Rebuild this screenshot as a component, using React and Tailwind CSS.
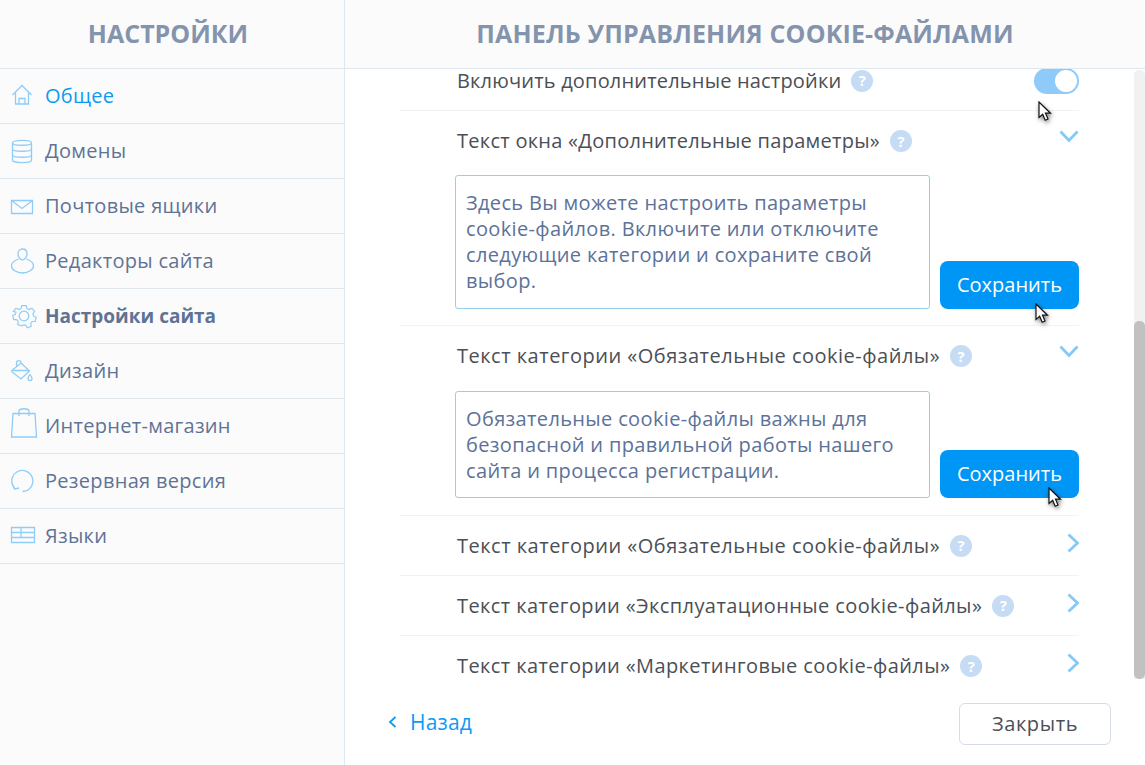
const font = { fontFamily: '"Open Sans", sans-serif' };

function NavIcon({ name }) {
  const common = {
    viewBox: "0 0 26 26",
    fill: "none",
    stroke: "#8fcdf8",
    strokeWidth: 1.3,
    className: "h-[26px] w-[26px] shrink-0 overflow-visible",
  };
  if (name === "home") {
    return (
      <svg {...common}>
        <path d="M1.500 12 11 2.500 20.500 12M4.500 10v11h13V10M8 21v-5.500h6V21" />
      </svg>
    );
  }
  if (name === "db") {
    return (
      <svg {...common}>
        <path d="M1.500 5c0-3.500 19-3.500 19 0v17c0 3.500-19 3.500-19 0Z" />
        <path d="M1.500 5c0 3 19 3 19 0M1.500 11c0 3 19 3 19 0M1.500 17c0 3 19 3 19 0" />
      </svg>
    );
  }
  if (name === "mail") {
    return (
      <svg {...common}>
        <path d="M.5 7.500h21v13H.5zM.5 7.500l10.500 8 10.500-8" />
      </svg>
    );
  }
  if (name === "user") {
    return (
      <svg {...common}>
        <path d="M11.500 1c2.800 0 4.500 2 4.500 4.800s-2 6-4.500 6-4.500-3.200-4.500-6S8.700 1 11.500 1Z" />
        <path d="M7.500 11C3.500 12.500.5 15 .5 18c0 3.500 5 7 11 7s11-3.500 11-7c0-3-3-5.500-7-7" />
      </svg>
    );
  }
  if (name === "gear") {
    return (
      <svg {...common}>
        <circle cx="13" cy="13" r="4.800" />
        <path d="M10.500 1.500h5l.8 3.300 2.500 1.100 3-1.600 3 3.600-1.900 2.800.7 2.500 2.900 1.300-1.100 4.500-3.300.1-1.700 2.100.6 3.300-4.300 1.500-1.800-2.800h-2.800L10.300 24l-4.300-1.500.6-3.300-1.700-2.100-3.300-.1-1.100-4.500 2.900-1.300.7-2.500L1.200 7.900l3-3.600 3 1.600 2.500-1.100z" transform="translate(1.300 1.300) scale(.9)" />
      </svg>
    );
  }
  if (name === "bucket") {
    return (
      <svg {...common}>
        <path d="M10 5 18.500 13 10 21 1 14 .8 12.500ZM1 12.500h17.500M5.500 9V4.500c0-2.500 4.500-2.500 4.500 0V6" />
        <path d="M21 20.500c0 2.800-4 2.800-4 0 0-1.300 1-2.500 2-3.800 1 1.300 2 2.500 2 3.800Z" />
      </svg>
    );
  }
  if (name === "bag") {
    return (
      <svg {...common}>
        <path d="M2 .5h22l1.500 23.500H.5ZM8 3v-5c0-3 10-3 10 0v5" />
      </svg>
    );
  }
  if (name === "restore") {
    return (
      <svg {...common}>
        <path d="M3.500 20A10.500 10.500 0 1 1 11.500 23.500" />
        <path d="M1.500 16.500 3.500 21l4.500-1" />
      </svg>
    );
  }
  return (
    <svg {...common}>
      <path d="M.5 4.500h23v15H.5zM.5 9.500h23M.5 14.500h23M10 4.500v10" />
    </svg>
  );
}

const navItems = [
  { icon: "home", label: "Общее", active: true },
  { icon: "db", label: "Домены" },
  { icon: "mail", label: "Почтовые ящики" },
  { icon: "user", label: "Редакторы сайта" },
  { icon: "gear", label: "Настройки сайта", bold: true },
  { icon: "bucket", label: "Дизайн" },
  { icon: "bag", label: "Интернет-магазин" },
  { icon: "restore", label: "Резервная версия" },
  { icon: "table", label: "Языки" },
];

function Help() {
  return (
    <span className="ml-[10px] flex h-[22px] w-[22px] shrink-0 items-center justify-center rounded-full bg-[#c6dcf4] text-[15px] font-bold tracking-normal text-white">
      ?
    </span>
  );
}

function ChevronDown() {
  return (
    <svg viewBox="0 0 20 13" fill="none" className="h-[13px] w-[20px]">
      <path d="M1.500 1.500 10 10.500l8.500-9" stroke="#85c9f8" strokeWidth="2.800" />
    </svg>
  );
}

function ChevronRight() {
  return (
    <svg viewBox="0 0 12 20" fill="none" className="h-[20px] w-[12px]">
      <path d="M1.500 1.500 10.500 10l-9 8.500" stroke="#85c9f8" strokeWidth="2.800" />
    </svg>
  );
}

function Cursor({ className }) {
  return (
    <svg
      viewBox="0 0 14 22"
      className={`pointer-events-none absolute h-[22px] w-[14px] drop-shadow-[1px_2px_2px_rgba(0,0,0,0.5)] ${className}`}
    >
      <path
        d="M1 1v15.500l3.700-3.300 2.500 6 2.800-1.200-2.500-5.800h5Z"
        fill="#fff"
        stroke="#111"
        strokeWidth="1.200"
      />
    </svg>
  );
}

function Heading({ children, tracking = "tracking-[0.4px]" }) {
  return (
    <div className={`flex items-center pl-[57px] text-[20px] leading-none text-[#4b4f56] ${tracking}`}>
      <span>{children}</span>
      <Help />
    </div>
  );
}

function EditorBlock({ title, tracking, lines, headClass, bodyClass, pad, buttonCursor }) {
  return (
    <div className={`border-b border-[#f1f2f4] ${pad}`}>
      <div className={`flex items-start justify-between ${headClass}`}>
        <div className="flex h-[60px] items-center">
          <Heading tracking={tracking}>{title}</Heading>
        </div>
        <div className="pt-[19px]">
          <ChevronDown />
        </div>
      </div>
      <div className="flex items-end justify-between pl-[55px]">
        <div
          className={`w-[475px] rounded-[3px] border border-[#93d1ea] px-[10px] py-[14px] text-[20px] leading-[26px] tracking-[0.35px] whitespace-nowrap text-[#5c7299] ${bodyClass}`}
        >
          {lines.map((line) => (
            <div key={line}>{line}</div>
          ))}
        </div>
        <button
          type="button"
          className="relative h-[48px] w-[139px] rounded-[8px] bg-[#0096f5] text-[20px] text-white"
        >
          Сохранить
          <Cursor className={buttonCursor} />
        </button>
      </div>
    </div>
  );
}

function CollapsedRow({ title, tracking, last }) {
  return (
    <div className={`flex h-[60px] items-center justify-between ${last ? "" : "border-b border-[#f1f2f4]"}`}>
      <Heading tracking={tracking}>{title}</Heading>
      <div className="-mt-[6px]">
        <ChevronRight />
      </div>
    </div>
  );
}

export default function App() {
  return (
    <div style={font} className="flex h-[765px] w-[1145px] overflow-hidden bg-white">
      <aside className="flex w-[345px] shrink-0 flex-col border-r border-[#dfe8ee] bg-[#fbfbfc]">
        <div className="flex h-[69px] shrink-0 items-center justify-center border-b border-[#dfe8ee] pr-[8px] text-[25px] font-bold uppercase text-[#8494ad]">
          Настройки
        </div>
        {navItems.map((item) => (
          <div
            key={item.label}
            className="flex h-[55px] shrink-0 items-center gap-[8px] border-b border-[#dfe6ec] pl-[11px]"
          >
            <NavIcon name={item.icon} />
            <span
              className={`${item.active ? "text-[#0a9bf5]" : "text-[#5f7395]"} ${item.bold ? "text-[19px] font-bold" : "text-[20px] tracking-[0.3px]"}`}
            >
              {item.label}
            </span>
          </div>
        ))}
      </aside>

      <main className="flex min-w-0 flex-1 flex-col">
        <header className="z-10 flex h-[69px] shrink-0 items-center justify-center border-b border-[#dfe8ee] bg-[#fbfbfc] text-[25px] font-bold tracking-[0.15px] uppercase text-[#8494ad]">
          Панель управления cookie-файлами
        </header>

        <div className="flex h-[621px] shrink-0">
          <div className="min-w-0 flex-1 overflow-hidden pl-[55px] pr-[55px]">
            <div className="-mt-[18px]">
              <div className="flex h-[60px] items-center justify-between border-b border-[#f1f2f4]">
                <Heading tracking="tracking-[0.18px]">Включить дополнительные настройки</Heading>
                <div className="relative flex h-[26px] w-[45px] items-center justify-end rounded-full bg-[#8fcbfa] pr-[2px]">
                  <span className="h-[22px] w-[22px] rounded-full bg-white" />
                  <Cursor className="left-[4px] top-[33px]" />
                </div>
              </div>
              <EditorBlock
                title="Текст окна «Дополнительные параметры»"
                tracking="tracking-[0.27px]"
                lines={[
                  "Здесь Вы можете настроить параметры",
                  "cookie-файлов. Включите или отключите",
                  "следующие категории и сохраните свой",
                  "выбор.",
                ]}
                headClass="h-[64px]"
                bodyClass="h-[134px]"
                pad="pb-[16px]"
                buttonCursor="left-[95px] top-[42px]"
              />
              <EditorBlock
                title="Текст категории «Обязательные cookie-файлы»"
                tracking="tracking-[0.5px]"
                lines={[
                  "Обязательные cookie-файлы важны для",
                  "безопасной и правильной работы нашего",
                  "сайта и процесса регистрации.",
                ]}
                headClass="h-[65px]"
                bodyClass="h-[107px]"
                pad="pb-[17px]"
                buttonCursor="left-[108px] top-[37px]"
              />
              <CollapsedRow
                title="Текст категории «Обязательные cookie-файлы»"
                tracking="tracking-[0.5px]"
              />
              <CollapsedRow title="Текст категории «Эксплуатационные cookie-файлы»" />
              <CollapsedRow title="Текст категории «Маркетинговые cookie-файлы»" last />
            </div>
          </div>
          <div className="mt-[1px] flex h-[609px] w-[11px] shrink-0 flex-col justify-end rounded-t-[5px] bg-[#f1f1f1]">
            <div className="h-[358px] rounded-[5px] bg-[#c1c1c1]" />
          </div>
        </div>

        <footer className="flex flex-1 items-start justify-between pl-[43px] pr-[34px] pt-[13px]">
          <div className="flex items-center gap-[13px] pt-[5px] text-[21px] leading-[28px] tracking-[0.2px] text-[#0a9bf5]">
            <svg viewBox="0 0 9 12" fill="none" className="h-[12px] w-[9px]">
              <path d="M7.500 1 2 6l5.500 5" stroke="#0a9bf5" strokeWidth="1.800" />
            </svg>
            Назад
          </div>
          <button
            type="button"
            className="h-[42px] w-[152px] rounded-[6px] border border-[#d5dce3] bg-white text-[20px] tracking-[0.6px] text-[#4b4f56]"
          >
            Закрыть
          </button>
        </footer>
      </main>
    </div>
  );
}
